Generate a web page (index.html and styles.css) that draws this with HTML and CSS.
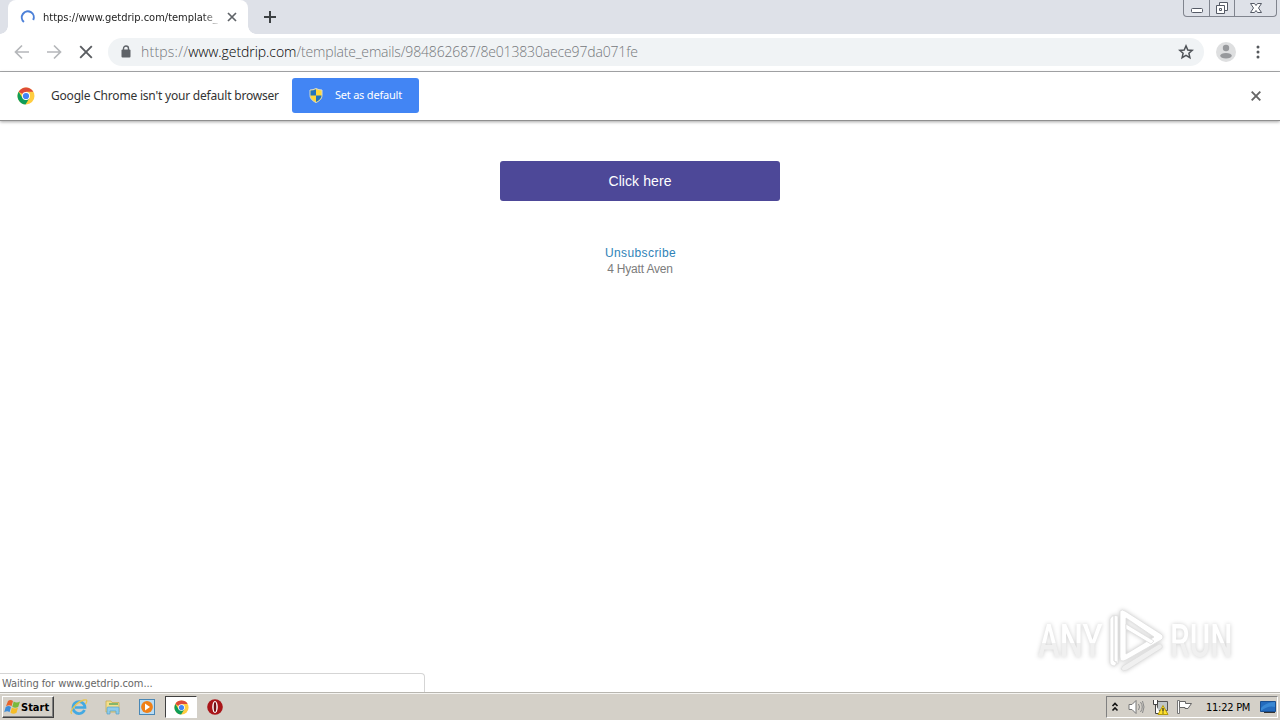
FILE: index.html
```html
<!DOCTYPE html>
<html lang="en">
<head>
<meta charset="UTF-8">
<title>Click here</title>
<link rel="stylesheet" href="styles.css">
</head>
<body>
<div class="tabstrip">
  <div class="tab">
    <svg class="spinner" width="16" height="16" viewBox="0 0 16 16"><path d="M3.9 12.9A6 6 0 1 1 13.2 11" fill="none" stroke="#4c80d8" stroke-width="2"/></svg>
    <span class="tab-title">https://www.getdrip.com/template_</span>
    <svg class="tab-close" width="10" height="10" viewBox="0 0 10 10"><path d="M1 1l8 8M9 1l-8 8" stroke="#5f6368" stroke-width="1.7"/></svg>
  </div>
  <svg class="new-tab" width="14" height="14" viewBox="0 0 14 14"><path d="M7 1v12M1 7h12" stroke="#3c4043" stroke-width="2"/></svg>
  <div class="window-buttons">
    <span class="min"><svg width="14" height="16" viewBox="0 0 14 16"><rect x="1.5" y="8.5" width="11" height="4" rx="1" fill="#fff" stroke="#555a66"/></svg></span>
    <span class="restore"><svg width="14" height="16" viewBox="0 0 14 16"><path d="M4.5 2.500h8v8h-8z" fill="#fff" stroke="#555a66"/><path d="M1.500 5.500h8v8h-8z" fill="#fff" stroke="#555a66"/><path d="M4.500 8.500h2v2h-2z" fill="none" stroke="#555a66"/></svg></span>
    <span class="close"><svg width="14" height="16" viewBox="0 0 14 16"><path d="M1.500 3.500h4L7 5.500l1.500-2h4L9.500 8l3 4.500h-4l-1.500-2-1.500 2h-4l3-4.500z" fill="#fff" stroke="#555a66"/></svg></span>
  </div>
</div>

<div class="toolbar">
  <svg class="nav" width="16" height="16" viewBox="0 0 16 16"><path d="M15 8H2M8 1.500L1.500 8 8 14.500" fill="none" stroke="#b5b7ba" stroke-width="1.700"/></svg>
  <svg class="nav" width="16" height="16" viewBox="0 0 16 16"><path d="M1 8h13M8 1.500L14.500 8 8 14.500" fill="none" stroke="#b5b7ba" stroke-width="1.700"/></svg>
  <svg class="nav" width="16" height="16" viewBox="0 0 16 16"><path d="M2.200 2.200l11.600 11.600M13.800 2.200L2.200 13.800" stroke="#5a5d61" stroke-width="1.900"/></svg>
  <div class="omnibox">
    <svg class="lock" width="10" height="13" viewBox="0 0 10 13"><path d="M2.500 6V3.500a2.500 2.500 0 0 1 5 0V6" fill="none" stroke="#5f6368" stroke-width="1.400"/><rect x=".5" y="4.500" width="9" height="8" rx="1" fill="#5f6368"/></svg>
    <span class="url"><span class="scheme">https://</span><span class="host">www.getdrip.com</span><span class="path">/template_emails/984862687/8e013830aece97da071fe</span></span>
    <svg class="star" width="16" height="16" viewBox="0 0 16 16"><path d="M8 1.900l1.800 4.100 4.400.4-3.300 2.900 1 4.400L8 11.400l-3.900 2.300 1-4.400-3.300-2.900 4.400-.4z" fill="none" stroke="#4f5358" stroke-width="1.500"/></svg>
  </div>
  <svg class="avatar" width="20" height="20" viewBox="0 0 20 20"><circle cx="10" cy="10" r="10" fill="#dedfe0"/><circle cx="10" cy="6" r="3.200" fill="#97999c"/><ellipse cx="10" cy="13.800" rx="5.800" ry="2.800" fill="#97999c"/></svg>
  <svg class="menu" width="4" height="16" viewBox="0 0 4 16"><g fill="#55585c"><circle cx="2" cy="3" r="1.500"/><circle cx="2" cy="8" r="1.500"/><circle cx="2" cy="13" r="1.500"/></g></svg>
</div>

<div class="infobar">
  <svg class="chrome" width="18" height="18" viewBox="0 0 18 18"><circle cx="9" cy="9" r="8.500" fill="#ffcd40"/><path d="M9 9L1.640 4.750A8.500 8.500 0 0 1 16.360 4.750H9z" fill="#dd4b39"/><path d="M1.640 4.750A8.500 8.500 0 0 0 8.500 17.500L12.500 11 9 9 5.500 11z" fill="#0f9d58"/><circle cx="9" cy="9" r="4" fill="#fff"/><circle cx="9" cy="9" r="3.100" fill="#4285f4"/></svg>
  <span class="infobar-text">Google Chrome isn't your default browser</span>
  <button class="set-default">
    <svg width="14" height="15" viewBox="0 0 14 15"><path d="M7 .5q3 1.500 6 1.500v5.500c0 3-2.500 5.500-6 7-3.500-1.500-6-4-6-7V2q3 0 6-1.500z" fill="#ffd83b" stroke="#d9dccb"/><path d="M7 1.200v6.300H1.500v-5Q4.500 2.500 7 1.200zM7 7.500h5.500c0 3-2.500 5-5.500 6.500z" fill="#2374bc"/></svg>
    <span class="set-text">Set as default</span>
  </button>
  <svg class="infobar-close" width="10" height="10" viewBox="0 0 10 10"><path d="M.7.700l8.600 8.600M9.300.700L.7 9.300" stroke="#666" stroke-width="1.900"/></svg>
</div>

<main class="page">
  <a class="button"><span>Click here</span></a>
  <a class="unsubscribe">Unsubscribe</a>
  <span class="address">4 Hyatt Aven</span>
  <div class="status">Waiting for www.getdrip.com...</div>
  <div class="watermark">
    <span class="mark-any">ANY</span>
    <svg width="60" height="64" viewBox="0 0 60 64"><g fill="#fff" stroke="#dedede" stroke-width=".8"><path fill-rule="evenodd" d="M14 2q2-2 5 0l36 23q4 3 0 6L20 51q-6 3-6-3zM20 9v36l28-17z"/><path d="M8 7v45l4 3v-3V7q-6-2-8 3v43q0 4 5 4l2-4-3-1z"/><path d="M20 15l28 17-3 3-25-15z"/><path fill="#f0f0f0" d="M17 57l36-22q4 0 3 4L21 61q-4 2-6-1z"/></g></svg>
    <span class="mark-run">RUN</span>
  </div>
</main>

<footer class="taskbar">
  <div class="start">
    <svg width="17" height="16" viewBox="0 0 17 16"><path d="M4 2q2.500-2 5 0L7.500 7.200q-2-2-5.500 0z" fill="#e8642c"/><path d="M9.700 2.500q3 2 6.300 0L14.300 7.700q-3 2-6 0z" fill="#79b93c"/><path d="M1.700 8q3-2 5.300 0L5.500 13.200q-2-2-5.300 0z" fill="#3d8dda"/><path d="M7.900 8.500q3 2 6.100 0L12.500 13.700q-3 2-6 0z" fill="#f5bc26"/></svg>
    <span class="start-text">Start</span>
  </div>
  <div class="quick">
    <span class="task"><svg width="18" height="18" viewBox="0 0 18 18"><path d="M14.500 12A6 6 0 1 1 15 9.500H5" fill="none" stroke="#43a9e2" stroke-width="2.700"/><path d="M2 15.500C-2 15 6 4 14 2c4-1 3 2 1.500 4" fill="none" stroke="#e8c552" stroke-width="1.300"/></svg></span>
    <span class="task"><svg width="18" height="18" viewBox="0 0 18 18"><path d="M2 3h5l1 1.500h7V14H2z" fill="#f5df8b" stroke="#c8ad52" stroke-width=".8"/><path d="M5 6h9" stroke="#5ea860" stroke-width="1.500"/><path d="M3 16V10q0-1 1-1h10q1 0 1 1v6h-3v-3H6v3z" fill="#8ecbea" stroke="#58a1c8" stroke-width=".7"/></svg></span>
    <span class="task"><svg width="18" height="18" viewBox="0 0 18 18"><rect x="1.500" y="1.500" width="15" height="15" fill="#b9dcf4" stroke="#4987b5"/><circle cx="9" cy="9" r="5.900" fill="#f08017"/><path d="M7 5.500L12 9l-5 3.500z" fill="#fff"/></svg></span>
    <span class="task active"><svg width="15" height="15" viewBox="0 0 18 18"><circle cx="9" cy="9" r="8.500" fill="#ffcd40"/><path d="M9 9L1.640 4.750A8.500 8.500 0 0 1 16.360 4.750H9z" fill="#dd4b39"/><path d="M1.640 4.750A8.500 8.500 0 0 0 8.500 17.500L12.500 11 9 9 5.500 11z" fill="#0f9d58"/><circle cx="9" cy="9" r="4" fill="#fff"/><circle cx="9" cy="9" r="3.100" fill="#4285f4"/></svg></span>
    <span class="task"><svg width="18" height="18" viewBox="0 0 18 18"><circle cx="9" cy="9" r="7.800" fill="#a91519"/><ellipse cx="9" cy="9" rx="2.800" ry="6" fill="#fff"/><ellipse cx="9" cy="9" rx="1.300" ry="5" fill="#731015"/></svg></span>
  </div>
  <div class="tray">
    <svg class="chevrons" width="8" height="11" viewBox="0 0 8 11"><path d="M1.500 4L4 1.500 6.500 4M1.500 8.500L4 6l2.500 2.500" fill="none" stroke="#111" stroke-width="1.600"/></svg>
    <svg class="volume" width="17" height="16" viewBox="0 0 17 16"><path d="M1 5.500h3l4-4v13l-4-4H1z" fill="#fff" stroke="#777"/><path d="M10.500 5q2 3 0 6M12.500 3q3.500 5 0 10M14.500 2q3 6 0 12" fill="none" stroke="#888"/></svg>
    <svg class="network" width="17" height="16" viewBox="0 0 17 16"><path d="M5.500 2.500h10v9h-10z" fill="#bfc5c6" stroke="#555"/><path d="M1.500 1v4.500h4V1M3.500 5.500v9h5" fill="#fff" stroke="#444"/><path d="M11 6.500l5 9H6z" fill="#ffe12c" stroke="#b49a0a"/><path d="M11 9v3.500M11 13.500v1" stroke="#222" stroke-width="1.200"/></svg>
    <svg class="flag" width="17" height="16" viewBox="0 0 17 16"><path d="M1.500 14.500v-13h2v13z" fill="#fff" stroke="#777"/><path d="M3.500 2.500h6v2h6l-2.500 3.500-1 1.500h-3v-1h-5.500z" fill="#fff" stroke="#666"/></svg>
    <span class="clock">11:22 PM</span>
    <svg class="desktop" width="16" height="14" viewBox="0 0 16 14"><path d="M.5 1.500h15v10H.5z" fill="#246bbd" stroke="#194f91"/><path d="M1 8q5-6 14-6v5Q8 5 1 11z" fill="#3988d4"/><path d="M4 12.500h11" stroke="#333"/></svg>
  </div>
</footer>
</body>
</html>
```

FILE: styles.css
```css
* {
  box-sizing: border-box;
}

body {
  margin: 0;
  width: 1280px;
  height: 720px;
  overflow: hidden;
  display: flex;
  flex-direction: column;
  background: #fff;
  color: #222;
  font-family: "DejaVu Sans Condensed", "DejaVu Sans", sans-serif;
  font-size: 11px;
  white-space: nowrap;
}

svg {
  display: block;
  flex: none;
}

/* tabs */
.tabstrip {
  height: 34px;
  flex: none;
  display: flex;
  align-items: flex-start;
  padding: 0 3px 0 8px;
  background: #dee1e8;
}

.tab {
  position: relative;
  width: 240px;
  height: 34px;
  display: flex;
  align-items: center;
  padding-left: 12px;
  background: #fff;
  border-radius: 8px 8px 0 0;
}

.tab::before,
.tab::after {
  content: "";
  position: absolute;
  bottom: 0;
  width: 8px;
  height: 8px;
}

.tab::before {
  left: -8px;
  background: radial-gradient(circle at 0 0, transparent 7.5px, #fff 8px);
}

.tab::after {
  right: -8px;
  background: radial-gradient(circle at 100% 0, transparent 7.5px, #fff 8px);
}

.tab-title {
  width: 176px;
  margin: 0 8px 0 7px;
  overflow: hidden;
  font-size: 11px;
  -webkit-mask-image: linear-gradient(to right, #000 160px, transparent 178px);
  mask-image: linear-gradient(to right, #000 160px, transparent 178px);
}

.new-tab {
  margin: 10px 0 0 15px;
}

.window-buttons {
  display: flex;
  height: 17px;
  margin-left: auto;
  border: 1px solid #80848e;
  border-top: 0;
  border-radius: 0 0 4px 4px;
}

.window-buttons span {
  width: 25px;
  display: flex;
  justify-content: center;
}

.window-buttons span + span {
  border-left: 1px solid #80848e;
}

.window-buttons .close {
  width: 42px;
}

/* toolbar */
.toolbar {
  height: 38px;
  flex: none;
  display: flex;
  align-items: center;
  padding: 0 20px 2px 14px;
  border-bottom: 1px solid #a9abad;
}

.nav {
  margin-right: 16px;
}

.omnibox {
  width: 1096px;
  height: 28px;
  display: flex;
  align-items: center;
  margin-left: -2px;
  padding: 0 10px 0 13px;
  border-radius: 14px;
  background: #f0f3f5;
}

.url {
  margin-left: 10px;
  color: #74777b;
  font-family: "Open Sans", sans-serif;
  font-size: 14px;
  font-weight: 300;
}

.scheme {
  letter-spacing: 0.22px;
}

.host {
  color: #000;
  letter-spacing: -0.06px;
}

.path {
  letter-spacing: -0.16px;
}

.star {
  margin-left: auto;
}

.avatar {
  margin-left: 12px;
}

.menu {
  margin-left: auto;
}

/* default browser bar */
.infobar {
  position: relative;
  height: 49px;
  flex: none;
  display: flex;
  align-items: center;
  padding: 0 19px 0 17px;
  background: #fff;
  border-bottom: 1px solid #8f8f8f;
  box-shadow: 0 1px 3px rgba(0, 0, 0, 0.35);
}

.infobar-text {
  margin-left: 16px;
  padding-bottom: 2px;
  color: #333;
  font-family: "Noto Sans", sans-serif;
  font-size: 12px;
  letter-spacing: -0.2px;
}

.set-default {
  width: 127px;
  height: 35px;
  display: flex;
  align-items: center;
  margin: 0 0 2px 13px;
  padding: 0 0 0 17px;
  border: 0;
  border-radius: 3px;
  background: #4285f4;
  color: #fff;
}

.set-text {
  margin-left: 12px;
  padding-bottom: 1px;
  font-family: "Noto Sans", sans-serif;
  font-size: 11px;
  letter-spacing: -0.2px;
}

.infobar-close {
  margin-left: auto;
}

/* page */
.page {
  position: relative;
  flex: 1;
  display: flex;
  flex-direction: column;
  align-items: center;
  padding-top: 40px;
  font-family: "Liberation Sans", Arial, sans-serif;
}

.button {
  width: 280px;
  height: 40px;
  display: flex;
  align-items: center;
  justify-content: center;
  margin-bottom: 44px;
  border-radius: 3px;
  background: #4d4898;
  color: #fff;
  font-size: 14px;
  letter-spacing: 0.08px;
}

.unsubscribe {
  padding-left: 1px;
  color: #2f83b7;
  font-size: 12px;
  line-height: 16px;
  letter-spacing: 0.4px;
}

.address {
  color: #7c7c7c;
  font-size: 12px;
  line-height: 16px;
  letter-spacing: -0.18px;
}

.status {
  position: absolute;
  left: 0;
  bottom: 0;
  width: 425px;
  height: 19px;
  padding-left: 2px;
  border: 1px solid #d5d5d5;
  border-left: 0;
  border-bottom: 0;
  border-radius: 0 4px 0 0;
  color: #666;
  font-family: "DejaVu Sans Condensed", "DejaVu Sans", sans-serif;
  font-size: 11px;
  line-height: 19px;
  letter-spacing: -0.07px;
}

.watermark {
  position: absolute;
  left: 1038px;
  top: 488px;
  display: flex;
  align-items: center;
  color: #fff;
  filter: drop-shadow(0 0 2px rgba(0, 0, 0, 0.2));
}

.watermark span {
  font-family: Roboto, sans-serif;
  font-size: 46px;
  font-weight: 500;
  line-height: 62px;
  transform-origin: 0 50%;
  background: linear-gradient(#fff 54%, #f0f0f0 54%);
  -webkit-background-clip: text;
  background-clip: text;
  color: transparent;
}

.watermark svg {
  margin: 0 4px;
}

.mark-any {
  width: 92px;
  margin-right: -28px;
  transform: scaleX(0.71);
}

.mark-run {
  width: 94px;
  transform: scaleX(0.68);
}

/* taskbar */
.taskbar {
  height: 28px;
  flex: none;
  display: flex;
  align-items: center;
  padding: 1px 2px 0;
  border-top: 1px solid #b8b6b0;
  background: #d4d0c8;
  box-shadow: inset 0 1px #f5f4f1;
}

.start {
  width: 52px;
  height: 22px;
  display: flex;
  align-items: center;
  padding-left: 1px;
  border: 1px solid;
  border-color: #fff #404040 #404040 #fff;
  box-shadow: inset -1px -1px #808080;
  color: #000;
}

.start-text {
  font-size: 11px;
  font-weight: bold;
}

.quick {
  display: flex;
  margin-left: 9px;
}

.task {
  width: 32px;
  height: 22px;
  display: flex;
  align-items: center;
  justify-content: center;
  margin-right: 2px;
}

.active {
  border: 1px solid;
  border-color: #404040 #fff #fff #404040;
  background: #fff;
}

.tray {
  width: 172px;
  height: 22px;
  display: flex;
  align-items: center;
  margin-left: auto;
  padding-left: 5px;
  border: 1px solid;
  border-color: #808080 #fff #fff #808080;
  color: #000;
}

.chevrons {
  margin-left: -1px;
}

.volume {
  margin-left: 9px;
}

.network {
  margin-left: 7px;
}

.flag {
  margin-left: 7px;
}

.clock {
  width: 46px;
  margin-left: 13px;
  font-size: 11px;
  letter-spacing: -0.25px;
}

.desktop {
  margin-left: 8px;
}
```
